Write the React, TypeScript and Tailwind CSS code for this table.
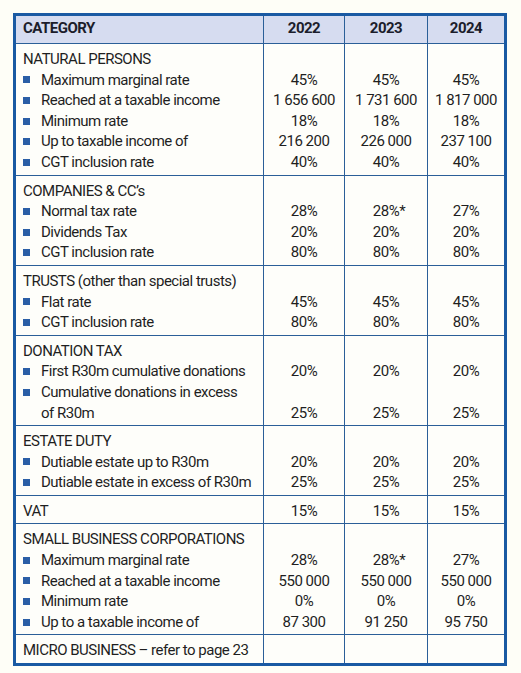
import React from 'react';

type Line = {
  label: string;
  bullet?: boolean;
  indent?: boolean;
  values?: string[];
};

type Section = { lines: Line[] };

const b = (label: string, values?: string[]): Line => ({ label, bullet: true, values });

const sections: Section[] = [
  {
    lines: [
      { label: 'NATURAL PERSONS' },
      b('Maximum marginal rate', ['45%', '45%', '45%']),
      b('Reached at a taxable income', ['1 656 600', '1 731 600', '1 817 000']),
      b('Minimum rate', ['18%', '18%', '18%']),
      b('Up to taxable income of', ['216 200', '226 000', '237 100']),
      b('CGT inclusion rate', ['40%', '40%', '40%']),
    ],
  },
  {
    lines: [
      { label: 'COMPANIES & CC’s' },
      b('Normal tax rate', ['28%', '28%*', '27%']),
      b('Dividends Tax', ['20%', '20%', '20%']),
      b('CGT inclusion rate', ['80%', '80%', '80%']),
    ],
  },
  {
    lines: [
      { label: 'TRUSTS (other than special trusts)' },
      b('Flat rate', ['45%', '45%', '45%']),
      b('CGT inclusion rate', ['80%', '80%', '80%']),
    ],
  },
  {
    lines: [
      { label: 'DONATION TAX' },
      b('First R30m cumulative donations', ['20%', '20%', '20%']),
      b('Cumulative donations in excess'),
      { label: 'of R30m', indent: true, values: ['25%', '25%', '25%'] },
    ],
  },
  {
    lines: [
      { label: 'ESTATE DUTY' },
      b('Dutiable estate up to R30m', ['20%', '20%', '20%']),
      b('Dutiable estate in excess of R30m', ['25%', '25%', '25%']),
    ],
  },
  {
    lines: [{ label: 'VAT', values: ['15%', '15%', '15%'] }],
  },
  {
    lines: [
      { label: 'SMALL BUSINESS CORPORATIONS' },
      b('Maximum marginal rate', ['28%', '28%*', '27%']),
      b('Reached at a taxable income', ['550 000', '550 000', '550 000']),
      b('Minimum rate', ['0%', '0%', '0%']),
      b('Up to a taxable income of', ['87 300', '91 250', '95 750']),
    ],
  },
  {
    lines: [{ label: 'MICRO BUSINESS – refer to page 23' }],
  },
];

const years = ['2022', '2023', '2024'];

function Value({ text }: { text?: string }) {
  if (!text) return <div>&nbsp;</div>;
  if (text.endsWith('*')) {
    return (
      <div>
        <span className="relative">
          {text.slice(0, -1)}
          <span className="absolute left-full top-[-1px]">*</span>
        </span>
      </div>
    );
  }
  return <div>{text}</div>;
}

export default function App() {
  return (
    <div className="min-h-screen bg-[#fefef7] pt-[13px] pl-[13px] font-['Roboto',sans-serif] text-[15px] tracking-[-0.5px] text-[#1f1f1f] whitespace-nowrap">
      <div className="w-[494px] border-[3px] border-[#1a5aa3] bg-[#fefefa]">
        <div className="grid h-[27px] grid-cols-[247px_81px_83px_1fr] bg-[#d6dcf0] font-bold text-[#1c1d2b] leading-[25px]">
          <div className="pl-[7px]">CATEGORY</div>
          {years.map((y) => (
            <div key={y} className="border-l border-[#2b5f98] text-center">
              {y}
            </div>
          ))}
        </div>

        {sections.map((section, si) => (
          <div key={si} className="grid grid-cols-[247px_81px_83px_1fr] border-t border-[#2b5f98] leading-[20.6px]">
            <div className="pl-[7px] pt-[5px] pb-[2px]">
              {section.lines.map((line, li) => (
                <div key={li} className="flex items-center">
                  {line.bullet && <span className="mr-[11px] inline-block h-[7px] w-[7px] shrink-0 bg-[#2a5ea6]" />}
                  {line.indent && <span className="inline-block w-[18px] shrink-0" />}
                  <span>{line.label}</span>
                </div>
              ))}
            </div>
            {[0, 1, 2].map((ci) => (
              <div key={ci} className="border-l border-[#2b5f98] pt-[5px] pb-[2px] text-center">
                {section.lines.map((line, li) => (
                  <Value key={li} text={line.values?.[ci]} />
                ))}
              </div>
            ))}
          </div>
        ))}
      </div>
    </div>
  );
}
